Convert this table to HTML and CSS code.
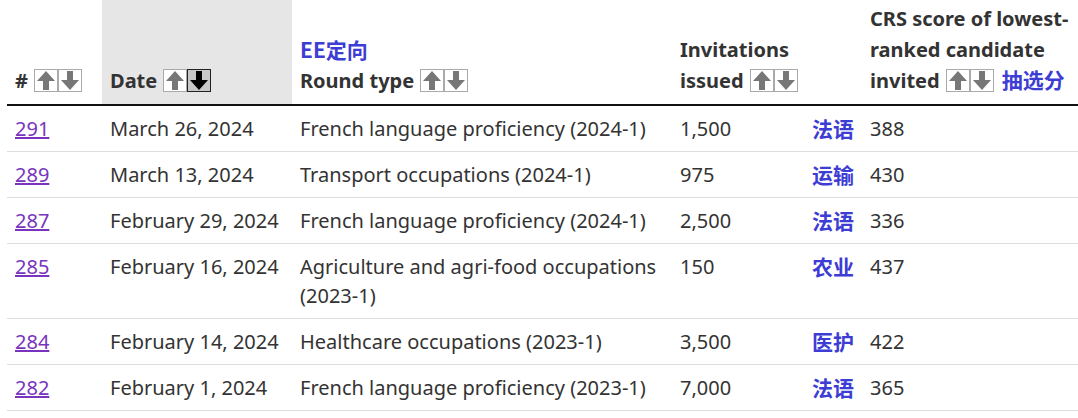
FILE: index.html
```html
<!DOCTYPE html>
<html lang="en">
<head>
<meta charset="utf-8">
<title>Express Entry rounds</title>
<link rel="stylesheet" href="styles.css">
</head>
<body>
<table class="rounds">
  <thead>
    <tr>
      <th class="c-num">#<span class="sort"><span class="btn"><svg viewBox="0 0 22 21"><polygon points="11,1 20,11 14,11 14,20 8,20 8,11 2,11"/></svg></span><span class="btn"><svg viewBox="0 0 22 21"><polygon points="11,20 20,10 14,10 14,1 8,1 8,10 2,10"/></svg></span></span></th>
      <th class="c-date">Date<span class="sort"><span class="btn"><svg viewBox="0 0 22 21"><polygon points="11,1 20,11 14,11 14,20 8,20 8,11 2,11"/></svg></span><span class="btn active"><svg viewBox="0 0 22 21"><polygon points="11,20 20,10 14,10 14,1 8,1 8,10 2,10"/></svg></span></span></th>
      <th class="c-type"><span class="zh zh-head">EE定向</span>Round type<span class="sort"><span class="btn"><svg viewBox="0 0 22 21"><polygon points="11,1 20,11 14,11 14,20 8,20 8,11 2,11"/></svg></span><span class="btn"><svg viewBox="0 0 22 21"><polygon points="11,20 20,10 14,10 14,1 8,1 8,10 2,10"/></svg></span></span></th>
      <th class="c-inv">Invitations issued<span class="sort"><span class="btn"><svg viewBox="0 0 22 21"><polygon points="11,1 20,11 14,11 14,20 8,20 8,11 2,11"/></svg></span><span class="btn"><svg viewBox="0 0 22 21"><polygon points="11,20 20,10 14,10 14,1 8,1 8,10 2,10"/></svg></span></span></th>
      <th class="c-crs">CRS score of lowest-ranked candidate invited<span class="sort"><span class="btn"><svg viewBox="0 0 22 21"><polygon points="11,1 20,11 14,11 14,20 8,20 8,11 2,11"/></svg></span><span class="btn"><svg viewBox="0 0 22 21"><polygon points="11,20 20,10 14,10 14,1 8,1 8,10 2,10"/></svg></span></span><span class="zh zh-inline">抽选分</span></th>
    </tr>
  </thead>
  <tbody>
    <tr><td><a href="#">291</a></td><td>March 26, 2024</td><td>French language proficiency (2024-1)</td><td><span class="zh zh-tag">法语</span>1,500</td><td>388</td></tr>
    <tr><td><a href="#">289</a></td><td>March 13, 2024</td><td>Transport occupations (2024-1)</td><td><span class="zh zh-tag">运输</span>975</td><td>430</td></tr>
    <tr><td><a href="#">287</a></td><td>February 29, 2024</td><td>French language proficiency (2024-1)</td><td><span class="zh zh-tag">法语</span>2,500</td><td>336</td></tr>
    <tr><td><a href="#">285</a></td><td>February 16, 2024</td><td>Agriculture and agri-food occupations (2023-1)</td><td><span class="zh zh-tag">农业</span>150</td><td>437</td></tr>
    <tr><td><a href="#">284</a></td><td>February 14, 2024</td><td>Healthcare occupations (2023-1)</td><td><span class="zh zh-tag">医护</span>3,500</td><td>422</td></tr>
    <tr><td><a href="#">282</a></td><td>February 1, 2024</td><td>French language proficiency (2023-1)</td><td><span class="zh zh-tag">法语</span>7,000</td><td>365</td></tr>
  </tbody>
</table>
</body>
</html>
```

FILE: styles.css
```css
html, body {
  margin: 0;
  padding: 0;
  background: #fff;
}

body {
  font-family: "Noto Sans", "Open Sans", "Noto Sans CJK SC", sans-serif;
  font-size: 20px;
  color: #333;
}

.rounds {
  border-collapse: collapse;
  margin-left: 7px;
  width: 1071px;
  table-layout: fixed;
}

.rounds th {
  text-align: left;
  vertical-align: bottom;
  font-weight: 700;
  line-height: 31px;
  padding: 3px 8px 8px 8px;
  border-bottom: 2px solid #111;
}

.c-num { width: 79px; }
.c-date { width: 174px; background: #e6e6e6; }
.c-type { width: 364px; }
.c-inv { width: 174px; }
.c-crs { width: auto; }

.rounds td {
  vertical-align: top;
  line-height: 29px;
  padding: 8px;
  border-bottom: 1px solid #ddd;
}

.rounds a {
  color: #7834bc;
  text-decoration: underline;
}

.sort {
  display: inline-flex;
  vertical-align: middle;
  margin-left: 6px;
  position: relative;
  top: -2px;
}

.btn {
  display: inline-flex;
  width: 22px;
  height: 21px;
  border: 1px solid #aaa;
  background: #fff;
}

.btn svg {
  width: 22px;
  height: 21px;
  fill: #777;
}

.btn.active {
  background: #c8c8c8;
  border-color: #222;
}

.btn.active svg {
  fill: #000;
}

.zh {
  font-family: "Noto Sans CJK SC", "Noto Sans", sans-serif;
  font-weight: 700;
  color: #3d3dd4;
  line-height: 1;
}

.zh-head {
  display: block;
  font-size: 21px;
  line-height: 31px;
}

.zh-inline {
  font-size: 21px;
  margin-left: 8px;
}

.zh-tag {
  float: right;
  font-size: 21px;
  line-height: 29px;
}
```
